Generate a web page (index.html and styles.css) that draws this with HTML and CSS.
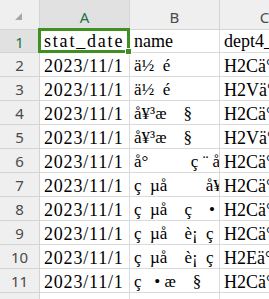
FILE: index.html
```html
<!DOCTYPE html>
<html>
<head>
<meta charset="utf-8">
<link rel="stylesheet" href="styles.css">
</head>
<body>
<div class="sheet">
  <div class="hd corner"><span class="tri"></span></div>
  <div class="hd col sel">A</div>
  <div class="hd col">B</div>
  <div class="hd col">C</div>

  <div class="rh sel">1</div>
  <div class="c txt wide active">stat_date<span class="selbox"><span class="handle"></span></span></div>
  <div class="c txt first">name</div>
  <div class="c txt first">dept4_name</div>

  <div class="rh">2</div>
  <div class="c txt date">2023/11/1</div>
  <div class="c moji">ä½&nbsp;&nbsp;é</div>
  <div class="c txt">H2Cä°</div>

  <div class="rh">3</div>
  <div class="c txt date">2023/11/1</div>
  <div class="c moji">ä½&nbsp;&nbsp;é</div>
  <div class="c txt">H2Vä°</div>

  <div class="rh">4</div>
  <div class="c txt date">2023/11/1</div>
  <div class="c moji">å¥³æ&nbsp;&nbsp;&nbsp;&nbsp;§</div>
  <div class="c txt">H2Cä°</div>

  <div class="rh">5</div>
  <div class="c txt date">2023/11/1</div>
  <div class="c moji">å¥³æ&nbsp;&nbsp;&nbsp;&nbsp;§</div>
  <div class="c txt">H2Vä°</div>

  <div class="rh">6</div>
  <div class="c txt date">2023/11/1</div>
  <div class="c moji">å°&nbsp;&nbsp;&nbsp;&nbsp;&nbsp;&nbsp;&nbsp;&nbsp;&nbsp;&nbsp;ç&nbsp;¨&nbsp;åº</div>
  <div class="c txt">H2Cä°</div>

  <div class="rh">7</div>
  <div class="c txt date">2023/11/1</div>
  <div class="c moji">ç&nbsp;&nbsp;µå&nbsp;&nbsp;&nbsp;&nbsp;&nbsp;&nbsp;&nbsp;&nbsp;&nbsp;å¥³a</div>
  <div class="c txt">H2Cä°</div>

  <div class="rh">8</div>
  <div class="c txt date">2023/11/1</div>
  <div class="c moji">ç&nbsp;&nbsp;µå&nbsp;&nbsp;&nbsp;&nbsp;ç&nbsp;&nbsp;&nbsp;&nbsp;•</div>
  <div class="c txt">H2Cä°</div>

  <div class="rh">9</div>
  <div class="c txt date">2023/11/1</div>
  <div class="c moji">ç&nbsp;&nbsp;µå&nbsp;&nbsp;&nbsp;&nbsp;è¡&nbsp;&nbsp;ç</div>
  <div class="c txt">H2Cä°</div>

  <div class="rh">10</div>
  <div class="c txt date">2023/11/1</div>
  <div class="c moji">ç&nbsp;&nbsp;µå&nbsp;&nbsp;&nbsp;&nbsp;è¡&nbsp;&nbsp;ç</div>
  <div class="c txt">H2Eä°</div>

  <div class="rh">11</div>
  <div class="c txt date">2023/11/1</div>
  <div class="c moji">ç&nbsp;&nbsp;&nbsp;•&nbsp;æ&nbsp;&nbsp;&nbsp;&nbsp;§</div>
  <div class="c txt">H2Cä°</div>

  <div class="rh"></div>
  <div class="c"></div>
  <div class="c"></div>
  <div class="c"></div>
</div>
</body>
</html>
```
FILE: styles.css
```css
html, body {
  margin: 0;
  padding: 0;
  background: #ffffff;
  overflow: hidden;
}

.sheet {
  display: grid;
  grid-template-columns: 40px 90px 90px 90px;
  grid-template-rows: 30px 23px repeat(11, 24px);
  width: 269px;
  height: 299px;
  overflow: hidden;
}

.sheet > div {
  box-sizing: border-box;
  border-right: 1px solid #dadada;
  border-bottom: 1px solid #dadada;
  overflow: hidden;
  white-space: nowrap;
}

.hd {
  background: #efefef;
  font-family: "Noto Sans", "Liberation Sans", sans-serif;
  font-size: 15px;
  color: #4a4a4a;
  display: flex;
  align-items: center;
  justify-content: center;
  padding-top: 4px;
  border-color: #d4d4d4 !important;
}

.corner {
  position: relative;
}

.tri {
  position: absolute;
  left: 15px;
  top: 13px;
  width: 0;
  height: 0;
  border-left: 7px solid transparent;
  border-bottom: 7px solid #a8a8a8;
}

.hd.sel {
  background: #e1e1e1;
  color: #217346;
}

.rh {
  background: #efefef;
  font-family: "Noto Sans", "Liberation Sans", sans-serif;
  font-size: 15px;
  color: #4a4a4a;
  display: flex;
  align-items: center;
  justify-content: center;
  padding-top: 1px;
  border-color: #d4d4d4 !important;
}

.rh.sel {
  background: #e1e1e1;
  color: #217346;
}

.c {
  display: flex;
  align-items: center;
  padding-left: 4px;
  padding-top: 3px;
  color: #000;
  line-height: 18px;
}

.txt {
  font-family: "Liberation Serif", serif;
  font-size: 18px;
}

.date {
  letter-spacing: 0.8px;
}

.wide {
  letter-spacing: 1.8px;
  padding-top: 0;
}

.first {
  padding-top: 0;
}

.moji {
  font-family: "Liberation Serif", serif;
  font-size: 17px;
}

.active {
  position: relative;
  overflow: visible !important;
}

.selbox {
  position: absolute;
  left: -2px;
  top: -2px;
  right: -1px;
  bottom: -1px;
  border: 3px solid #3f8f23;
  box-sizing: border-box;
  pointer-events: none;
}

.handle {
  position: absolute;
  right: -5px;
  bottom: -5px;
  width: 5px;
  height: 5px;
  background: #3f8f23;
  border: 1px solid #ffffff;
}
```
